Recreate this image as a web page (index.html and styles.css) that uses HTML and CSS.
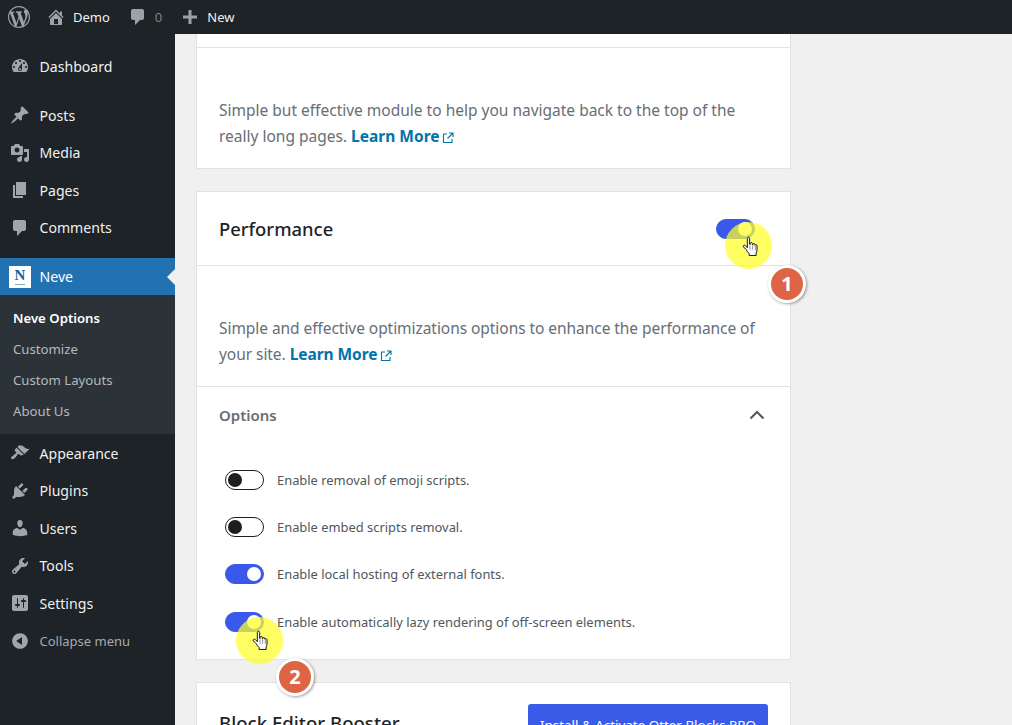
FILE: index.html
```html
<!DOCTYPE html>
<html lang="en">
<head>
<meta charset="utf-8">
<title>Neve Options</title>
<link rel="stylesheet" href="styles.css">
</head>
<body>
<svg class="defs" width="0" height="0" aria-hidden="true">
  <symbol id="i-wp" viewBox="0 0 20 20"><path d="M20 10c0-5.51-4.49-10-10-10C4.48 0 0 4.49 0 10c0 5.52 4.48 10 10 10 5.51 0 10-4.48 10-10zM7.78 15.37L4.37 6.22c.55-.02 1.17-.08 1.17-.08.5-.06.44-1.13-.06-1.11 0 0-1.45.11-2.37.11-.18 0-.37 0-.58-.01C4.12 2.69 6.87 1.11 10 1.11c2.33 0 4.45.87 6.05 2.34-.68-.11-1.65.39-1.65 1.58 0 .74.45 1.36.9 2.1.35.61.55 1.36.55 2.46 0 1.49-1.4 5-1.4 5l-3.03-8.37c.54-.02.82-.17.82-.17.5-.05.44-1.25-.06-1.22 0 0-1.44.12-2.38.12-.87 0-2.33-.12-2.33-.12-.5-.03-.56 1.2-.06 1.22l.92.08 1.26 3.41zM17.41 10c.24-.64.74-1.87.43-4.25.7 1.29 1.05 2.71 1.05 4.25 0 3.29-1.73 6.24-4.4 7.78.97-2.59 1.94-5.2 2.92-7.78zM6.1 18.09C3.12 16.65 1.11 13.53 1.11 10c0-1.3.23-2.48.72-3.59C3.25 10.3 4.67 14.2 6.1 18.09zm4.03-6.63l2.58 6.98c-.86.29-1.76.45-2.71.45-.79 0-1.57-.11-2.29-.33.81-2.38 1.62-4.74 2.42-7.1z"/></symbol>
  <symbol id="i-home" viewBox="0 0 20 20"><path d="M16 8.5l1.53 1.53-1.06 1.06L10 4.62l-6.47 6.47-1.06-1.06L10 2.5l4 4v-2h2v4zm-6-2.46l6 5.99V18H4v-5.97zM12 17v-5H8v5h4z"/></symbol>
  <symbol id="i-comment" viewBox="0 0 20 20"><path d="M5 2h9c1.1 0 2 .9 2 2v7c0 1.1-.9 2-2 2h-2l-5 5v-5H5c-1.1 0-2-.9-2-2V4c0-1.1.9-2 2-2z"/></symbol>
  <symbol id="i-plus" viewBox="0 0 20 20"><path d="M17 8.500v3h-5.500V17h-3v-5.500H3v-3h5.500V3h3v5.500H17z"/></symbol>
  <symbol id="i-dash" viewBox="0 0 20 20"><path d="M3.76 16h12.48c1.1-1.37 1.76-3.11 1.76-5 0-4.42-3.58-8-8-8s-8 3.58-8 8c0 1.89.66 3.63 1.76 5zM10 4c.55 0 1 .45 1 1s-.45 1-1 1-1-.45-1-1 .45-1 1-1zM6 6c.55 0 1 .45 1 1s-.45 1-1 1-1-.45-1-1 .45-1 1-1zm8 0c.55 0 1 .45 1 1s-.45 1-1 1-1-.45-1-1 .45-1 1-1zm-5.37 5.55L12 7v6c0 1.1-.9 2-2 2s-2-.9-2-2c0-.57.24-1.08.63-1.45zM4 10c.55 0 1 .45 1 1s-.45 1-1 1-1-.45-1-1 .45-1 1-1zm12 0c.55 0 1 .45 1 1s-.45 1-1 1-1-.45-1-1 .45-1 1-1zm-5 3c0-.55-.45-1-1-1s-1 .45-1 1 .45 1 1 1 1-.45 1-1z"/></symbol>
  <symbol id="i-pin" viewBox="0 0 20 20"><path d="M10.44 3.02l1.82-1.82 6.36 6.35-1.83 1.82c-1.05-.68-2.48-.57-3.41.36l-.75.75c-.92.93-1.04 2.35-.35 3.41l-1.83 1.82-2.41-2.41-2.8 2.79c-.42.42-3.38 2.71-3.8 2.29s1.86-3.39 2.28-3.81l2.79-2.79L4.1 9.36l1.83-1.82c1.05.69 2.48.57 3.4-.36l.75-.75c.93-.92 1.05-2.35.36-3.41z"/></symbol>
  <symbol id="i-media" viewBox="0 0 20 20"><path d="M13 11V4c0-.55-.45-1-1-1h-1.67L9 1H5L3.67 3H2c-.55 0-1 .45-1 1v7c0 .55.45 1 1 1h10c.55 0 1-.45 1-1zM7 4.5c1.38 0 2.5 1.12 2.5 2.5S8.38 9.5 7 9.5 4.5 8.38 4.5 7 5.62 4.5 7 4.5zM14 6h5v10.5c0 1.38-1.12 2.5-2.5 2.5S14 17.88 14 16.5s1.12-2.5 2.5-2.5c.17 0 .34.02.5.05V9h-3V6zm-4 8.05V13h2v3.5c0 1.38-1.12 2.5-2.5 2.5S7 17.88 7 16.5 8.12 14 9.5 14c.17 0 .34.02.5.05z"/></symbol>
  <symbol id="i-page" viewBox="0 0 20 20"><path d="M6 15V2h10v13H6zm-1 1h8v2H3V5h2v11z"/></symbol>
  <symbol id="i-brush" viewBox="0 0 20 20"><path d="M14.48 11.06L7.41 3.99l1.5-1.5c.5-.56 2.3-.47 3.51.32 1.21.8 1.43 1.28 2.91 2.1 1.18.64 2.45 1.26 4.45.85zm-.71.71L6.7 4.7 4.93 6.47c-.39.39-.39 1.02 0 1.41l1.06 1.06c.39.39.39 1.03 0 1.42-.6.6-1.43 1.11-2.21 1.69-.35.26-.7.53-1.01.84C1.43 13.23.44 14.9 1.4 15.86c.96.96 2.62-.03 3.96-1.38.31-.31.58-.66.84-1.01.58-.78 1.09-1.61 1.69-2.21.39-.39 1.02-.39 1.41 0l1.06 1.06c.39.39 1.02.39 1.41 0z"/></symbol>
  <symbol id="i-plug" viewBox="0 0 20 20"><path d="M13.11 4.36L9.87 7.6 8 5.73l3.24-3.24c.35-.34 1.05-.2 1.56.32.52.51.66 1.21.31 1.55zm-8 1.77l.91-1.12 9.01 9.01-1.19.84c-.71.71-2.63 1.16-3.82 1.16H6.14L4.9 17.26c-.59.59-1.54.59-2.12 0-.59-.58-.59-1.53 0-2.12l1.24-1.24v-3.88c0-1.13.4-3.19 1.09-3.89zm7.26 3.97l3.24-3.24c.34-.35 1.04-.21 1.55.31.52.51.66 1.21.31 1.55l-3.24 3.25z"/></symbol>
  <symbol id="i-user" viewBox="0 0 20 20"><path d="M10 9.25c-2.27 0-2.73-3.44-2.73-3.44C7 4.02 7.82 2 9.97 2c2.16 0 2.98 2.02 2.71 3.81 0 0-.41 3.44-2.68 3.44zm0 2.57L12.72 10c2.39 0 4.52 2.33 4.52 4.53v2.49s-3.65 1.13-7.24 1.13c-3.65 0-7.24-1.13-7.24-1.13v-2.49c0-2.25 1.94-4.48 4.47-4.48z"/></symbol>
  <symbol id="i-tool" viewBox="0 0 20 20"><path d="M16.68 9.77c-1.34 1.34-3.3 1.67-4.95.99l-5.41 6.52c-.99.99-2.59.99-3.58 0s-.99-2.59 0-3.57l6.52-5.42c-.68-1.65-.35-3.61.99-4.95 1.28-1.28 3.12-1.62 4.72-1.06l-2.89 2.89 2.82 2.82 2.86-2.87c.53 1.58.18 3.39-1.08 4.65zM3.81 16.21c.4.39 1.04.39 1.43 0 .4-.4.4-1.04 0-1.43-.39-.4-1.03-.4-1.43 0-.39.39-.39 1.03 0 1.43z"/></symbol>
  <symbol id="i-set" viewBox="0 0 20 20"><path d="M18 16V4c0-1.1-.9-2-2-2H4c-1.1 0-2 .9-2 2v12c0 1.1.9 2 2 2h12c1.1 0 2-.9 2-2zM8 11h1c.55 0 1 .45 1 1s-.45 1-1 1H8v1.5c0 .28-.22.5-.5.5s-.5-.22-.5-.5V13H6c-.55 0-1-.45-1-1s.45-1 1-1h1V5.5c0-.28.22-.5.5-.5s.5.22.5.5V11zm5-2h-1c-.55 0-1-.45-1-1s.45-1 1-1h1V5.5c0-.28.22-.5.5-.5s.5.22.5.5V7h1c.55 0 1 .45 1 1s-.45 1-1 1h-1v5.5c0 .28-.22.5-.5.5s-.5-.22-.5-.5V9z"/></symbol>
  <symbol id="i-collapse" viewBox="0 0 20 20"><path d="M10 2.16c4.33 0 7.84 3.51 7.84 7.84s-3.51 7.84-7.84 7.84S2.16 14.33 2.16 10 5.71 2.16 10 2.16zm2 11.72V6.12L6.18 9.97z"/></symbol>
  <symbol id="i-ext" viewBox="0 0 12 12"><path d="M5 2H1.500v8.500H10V7M7 1h4v4M11 1L5.500 6.500" fill="none" stroke="currentColor" stroke-width="1.1"/></symbol>
  <symbol id="i-hand" viewBox="0 0 18 24"><path d="M6 2.200c0-1.600 2.600-1.600 2.600 0V9l.6.100V8c0-1.400 2.400-1.400 2.400 0v1.400l.5.100V9c0-1.300 2.300-1.300 2.300.100v.9l.4.100c0-1.100 2.100-1.100 2.100.3v4.800c0 1.500-.5 2.500-1 3.600v2.700H8v-2.200c-1.200-1.100-2.400-2.600-3.400-4.400L1.500 11.800c-.7-1.400 1.200-2.600 2.300-1.400L6 12.800V2.200z" fill="#fff" stroke="#111" stroke-width="1.1" stroke-linejoin="round"/><path d="M9 10v5M12 10v5M15 10.500v5" stroke="#555" stroke-width=".7" fill="none"/></symbol>
</svg>

<div class="page">
  <header class="adminbar">
    <svg class="bar-logo"><use href="#i-wp"/></svg>
    <a class="bar-item"><svg class="bar-icon"><use href="#i-home"/></svg><span>Demo</span></a>
    <a class="bar-item bar-comments"><svg class="bar-icon"><use href="#i-comment"/></svg><span class="count">0</span></a>
    <a class="bar-item"><svg class="bar-icon"><use href="#i-plus"/></svg><span>New</span></a>
  </header>

  <div class="body-row">
    <nav class="sidebar">
      <ul class="menu">
        <li class="item"><svg class="icon"><use href="#i-dash"/></svg>Dashboard</li>
        <li class="item sep"><svg class="icon"><use href="#i-pin"/></svg>Posts</li>
        <li class="item"><svg class="icon"><use href="#i-media"/></svg>Media</li>
        <li class="item"><svg class="icon"><use href="#i-page"/></svg>Pages</li>
        <li class="item"><svg class="icon"><use href="#i-comment"/></svg>Comments</li>
        <li class="item current sep"><span class="neve-logo">N</span>Neve</li>
        <li class="submenu">
          <a class="sub active">Neve Options</a>
          <a class="sub">Customize</a>
          <a class="sub">Custom Layouts</a>
          <a class="sub">About Us</a>
        </li>
        <li class="item"><svg class="icon"><use href="#i-brush"/></svg>Appearance</li>
        <li class="item"><svg class="icon"><use href="#i-plug"/></svg>Plugins</li>
        <li class="item"><svg class="icon"><use href="#i-user"/></svg>Users</li>
        <li class="item"><svg class="icon"><use href="#i-tool"/></svg>Tools</li>
        <li class="item"><svg class="icon"><use href="#i-set"/></svg>Settings</li>
        <li class="item collapse"><svg class="icon"><use href="#i-collapse"/></svg>Collapse menu</li>
      </ul>
    </nav>

    <main class="content">
      <section class="card first-card">
        <div class="clipped-head"></div>
        <p class="desc">Simple but effective module to help you navigate back to the top of the really long pages. <a class="more">Learn More<svg class="ext"><use href="#i-ext"/></svg></a></p>
      </section>

      <section class="card">
        <div class="card-head">
          <h2>Performance</h2>
          <span class="toggle on"></span>
        </div>
        <p class="desc perf-desc">Simple and effective optimizations options to enhance the performance of your site. <a class="more">Learn More<svg class="ext"><use href="#i-ext"/></svg></a></p>
        <div class="options-head">
          <span>Options</span>
          <svg class="chev" viewBox="0 0 16 10"><path d="M1.500 8.500L8 2l6.500 6.500" fill="none" stroke="currentColor" stroke-width="2"/></svg>
        </div>
        <ul class="options">
          <li><span class="toggle"></span>Enable removal of emoji scripts.</li>
          <li><span class="toggle"></span>Enable embed scripts removal.</li>
          <li><span class="toggle on"></span>Enable local hosting of external fonts.</li>
          <li><span class="toggle on"></span>Enable automatically lazy rendering of off-screen elements.</li>
        </ul>
      </section>

      <section class="card">
        <div class="card-head booster">
          <h2>Block Editor Booster</h2>
          <button class="cta">Install &amp; Activate Otter Blocks PRO</button>
        </div>
      </section>
    </main>
  </div>

  <div class="spot spot-1"></div>
  <svg class="hand hand-1"><use href="#i-hand"/></svg>
  <div class="badge badge-1">1</div>
  <div class="spot spot-2"></div>
  <svg class="hand hand-2"><use href="#i-hand"/></svg>
  <div class="badge badge-2">2</div>
</div>
</body>
</html>
```

FILE: styles.css
```css
* { box-sizing: border-box; }
html, body { margin: 0; padding: 0; height: 100%; overflow: hidden; }
body { font-family: "Noto Sans", "Open Sans", sans-serif; background: #f0f0f0; color: #1d2327; }
.defs { position: absolute; }
.page { position: relative; width: 1012px; height: 725px; overflow: hidden; display: flex; flex-direction: column; }

.adminbar { height: 34px; flex: none; background: #1d2327; display: flex; align-items: center; color: #f0f0f1; font-size: 13px; padding-left: 8px; }
.bar-logo { width: 22px; height: 22px; fill: #9ca2a7; margin-right: 16px; }
.bar-item { display: flex; align-items: center; margin-right: 18px; }
.bar-icon { width: 20px; height: 20px; fill: #9ca2a7; margin-right: 7px; }
.bar-comments { margin-right: 18px; }
.bar-comments .bar-icon { margin-right: 7px; }
.count { color: #7c8287; }

.body-row { flex: 1; display: flex; min-height: 0; }
.sidebar { width: 175px; flex: none; background: #1d2327; }
.menu { list-style: none; margin: 0; padding: 13.3px 0 0; }
.item { height: 37.5px; display: flex; align-items: center; font-size: 14.1px; color: #f0f0f1; padding-left: 10px; }
.icon { width: 20px; height: 20px; fill: #a0a5aa; margin-right: 9.5px; flex: none; }
.sep { margin-top: 11.5px; }
.current { background: #2271b1; color: #fff; position: relative; }
.current::after { content: ""; position: absolute; right: 0; top: 50%; margin-top: -8px; border: 8px solid transparent; border-right-color: #f0f0f0; border-left-width: 0; }
.neve-logo { width: 22px; height: 22px; margin: 0 8.5px 0 -1px; background: #fff; color: #12609e; font: 700 15px/19px "Liberation Serif", serif; text-align: center; position: relative; flex: none; }
.neve-logo::after { content: ""; position: absolute; left: 6px; right: 6px; bottom: 3px; height: 1px; background: #7fa8c9; }
.submenu { background: #2c3338; padding: 7px 0; height: 139px; display: flex; flex-direction: column; }
.sub { height: 31px; display: flex; align-items: center; padding-left: 13px; font-size: 13.2px; color: #b4b9be; flex: none; }
.sub.active { color: #fff; font-weight: 600; }
.collapse { color: #a7aaad; font-size: 13px; }

.content { flex: 1; min-width: 0; padding-left: 21px; }
.card { width: 595px; background: #fff; border: 1px solid #e2e2e2; margin-bottom: 22px; }
.first-card { border-top: 0; height: 135px; }
.clipped-head { height: 14px; border-bottom: 1px solid #e2e2e2; }
.desc { margin: 50px 22px 0; font-size: 15.5px; line-height: 25.5px; color: #676e75; }
.more { color: #0073aa; font-weight: 700; }
.ext { width: 12px; height: 12px; margin-left: 2px; vertical-align: -2px; color: #0073aa; }

.card-head { height: 74px; display: flex; align-items: center; justify-content: space-between; padding: 0 35px 0 22px; border-bottom: 1px solid #e2e2e2; }
h2 { margin: 0; font-size: 18.4px; font-weight: 500; color: #1d2327; }
.perf-desc { letter-spacing: -.055px; }
.options-head { margin-top: 19px; height: 56px; border-top: 1px solid #e2e2e2; display: flex; align-items: center; justify-content: space-between; padding: 0 25px 0 22px; font-size: 15px; font-weight: 600; color: #676e75; }
.chev { width: 16px; height: 10px; color: #50575e; }
.options { list-style: none; margin: 0; padding: 14px 0 0 28px; height: 217px; }
.options li { height: 47.4px; display: flex; align-items: center; font-size: 12.9px; color: #50575e; }
.toggle { width: 39px; height: 20px; border-radius: 10px; border: 1px solid #1e1e1e; background: #fff; position: relative; margin-right: 13px; flex: none; }
.toggle::after { content: ""; position: absolute; width: 14px; height: 14px; border-radius: 50%; background: #1e1e1e; left: 2px; top: 2px; }
.toggle.on { background: #3a58e9; border-color: #3a58e9; }
.toggle.on::after { background: #fff; left: auto; right: 2px; }
.card-head .toggle { margin-right: 0; }

.booster { border-bottom: 0; padding-right: 22px; align-items: flex-start; padding-top: 21px; }
.booster h2 { margin-top: 6px; font-size: 18.6px; }
.cta { width: 240px; height: 44px; border: 0; padding: 0 0 3px; border-radius: 3px; background: #3a5be8; color: #fff; font: 13.4px "Noto Sans", sans-serif; }

.spot { position: absolute; width: 47px; height: 47px; border-radius: 50%; background: rgba(255, 255, 40, .72); }
.spot-1 { left: 725px; top: 222px; }
.spot-2 { left: 236px; top: 617px; }
.hand { position: absolute; width: 16px; height: 22px; }
.hand-1 { left: 742px; top: 236px; }
.hand-2 { left: 252px; top: 630px; }
.badge { position: absolute; width: 38px; height: 38px; border-radius: 50%; background: #dd6444; border: 3px solid #fff; box-shadow: 1px 1px 3px rgba(0, 0, 0, .4); color: #fff; font: 700 20px/32px "Noto Sans", sans-serif; text-align: center; }
.badge-1 { left: 768px; top: 265px; }
.badge-2 { left: 276px; top: 658px; }
```
